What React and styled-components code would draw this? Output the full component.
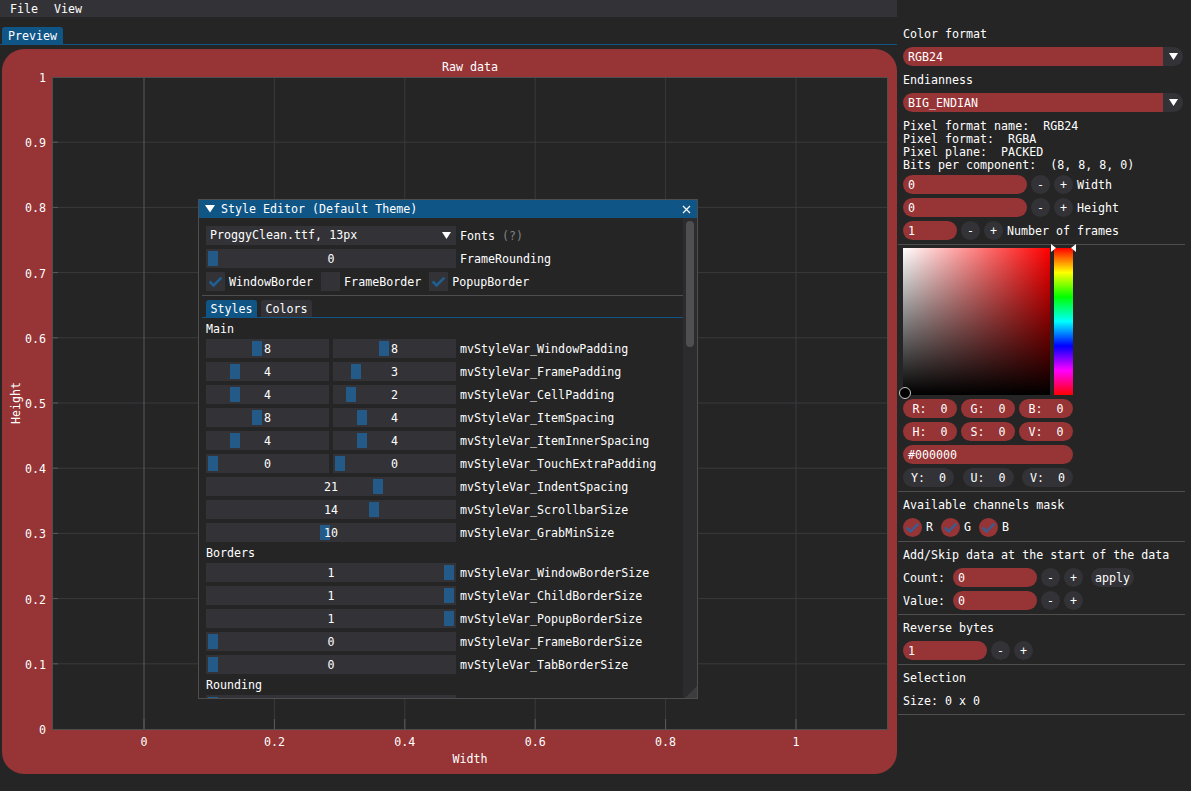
import React from "react"
import styled, { createGlobalStyle } from "styled-components"

const RED = "#963436"
const FRAME = "#333337"
const BLUE = "#0f5687"
const GRAB = "#245a87"
const BORDER = "#4e4e4e"
const BG = "#252526"

const GlobalStyle = createGlobalStyle`
  html, body { margin: 0; padding: 0; background: ${BG}; }
  body {
    font-family: "DejaVu Sans Mono", "Liberation Mono", monospace;
    font-size: 11.65px;
    line-height: 13px;
    color: #fff;
  }
  * { box-sizing: border-box; }
`

const Page = styled.div`
    position: relative;
    width: 1191px;
    height: 791px;
    display: flex;
    overflow: hidden;
    background: ${BG};
`

/* ---------- left window ---------- */

const LeftPane = styled.div`
    width: 898px;
    display: flex;
    flex-direction: column;
`

const MenuBar = styled.div`
    width: 897px;
    height: 17px;
    background: ${FRAME};
    display: flex;
    align-items: center;
    gap: 16px;
    padding: 2px 0 0 10px;
`

const TabBar = styled.div`
    margin-top: 10px;
    width: 897px;
    height: 18px;
    display: flex;
    padding-left: 2px;
    border-bottom: 1px solid ${BLUE};
`

const Tab = styled.div`
    height: 17px;
    line-height: 19px;
    padding: 0 6px;
    background: ${p => (p.$active ? BLUE : FRAME)};
    border-radius: 3px 3px 0 0;
`

const PlotFrame = styled.div`
    margin: 4px 0 0 2px;
    width: 895px;
    height: 725px;
    background: ${RED};
    border-radius: 22px;
`

const PlotTitle = styled.div`
    height: 28px;
    padding: 12px 0 0 50px;
    width: 886px;
    text-align: center;
`

const PlotRow = styled.div`
    display: flex;
`

const YAxis = styled.div`
    position: relative;
    width: 50px;
    height: 653px;
`

const YTick = styled.span`
    position: absolute;
    right: 6px;
    line-height: 13px;
`

const YTitle = styled.span`
    position: absolute;
    left: 14px;
    top: 326px;
    transform: translate(-50%, -50%) rotate(-90deg);
    white-space: nowrap;
`

const PlotArea = styled.div`
    width: 836px;
    height: 653px;
    border: 1px solid ${BORDER};
    background: ${BG};

    svg { display: block; }
`

const XAxis = styled.div`
    position: relative;
    margin-left: 50px;
    width: 836px;
    height: 23px;
`

const XTick = styled.span`
    position: absolute;
    top: 6px;
    transform: translateX(-50%);
`

const XTitle = styled.div`
    margin-left: 50px;
    width: 836px;
    text-align: center;
`

const xs = v => 91 + v * 652
const ys = v => 651 - v * 652

function PlotGrid () {
    const xv = [0, 0.2, 0.4, 0.6, 0.8, 1]
    const yv = [0.1, 0.2, 0.3, 0.4, 0.5, 0.6, 0.7, 0.8, 0.9]
    return (
        <svg width="834" height="651">
            {yv.map(v => (
                <line key={'h' + v} x1="0" x2="834" y1={ys(v)} y2={ys(v)} stroke="#3a3a3c" strokeWidth="1" />
            ))}
            {xv.map(v => (
                <line key={'v' + v} x1={xs(v)} x2={xs(v)} y1="0" y2="651" stroke={v === 0 ? '#5a5a5c' : '#3a3a3c'} strokeWidth="1" />
            ))}
            {yv.map(v => (
                <line key={'t' + v} x1="0" x2="5" y1={ys(v)} y2={ys(v)} stroke="#5a5a5c" strokeWidth="1" />
            ))}
            {xv.map(v => (
                <line key={'b' + v} x1={xs(v)} x2={xs(v)} y1="641" y2="651" stroke="#5a5a5c" strokeWidth="1" />
            ))}
        </svg>
    )
}

/* ---------- style editor ---------- */

const EditorWindow = styled.div`
    position: absolute;
    left: 198px;
    top: 199px;
    width: 500px;
    height: 500px;
    background: ${BG};
    border: 1px solid ${BORDER};
    display: flex;
    flex-direction: column;
`

const EditorTitle = styled.div`
    height: 18px;
    flex-shrink: 0;
    background: ${BLUE};
    display: flex;
    align-items: center;
    gap: 6px;
    padding: 0 6px 0 6px;

    span { line-height: 15px; }
    .close { margin-left: auto; }
`

const EditorBody = styled.div`
    position: relative;
    flex: 1;
    display: flex;
    overflow: hidden;
`

const EditorContent = styled.div`
    flex: 1;
    display: flex;
    flex-direction: column;
    gap: 4px;
    padding: 8px 3px 0 7px;
    overflow: hidden;
`

const Scrollbar = styled.div`
    width: 14px;
    background: #2c2c2f;
    padding: 3px 3px 0 3px;

    div {
        height: 126px;
        border-radius: 4px;
        background: #4f4f52;
    }
`

const ResizeGrip = styled.svg`
    position: absolute;
    right: 0;
    bottom: 0;
`

const EdRow = styled.div`
    display: flex;
    align-items: center;
    gap: 4px;
    height: 19px;
    flex-shrink: 0;
    white-space: nowrap;

    & > span { height: 19px; line-height: 21px; }
`

const EdCombo = styled.div`
    width: 250px;
    height: 19px;
    background: ${FRAME};
    display: flex;
    align-items: center;
    justify-content: space-between;
    padding-left: 4px;
    line-height: 21px;

    span.arrow {
        width: 19px;
        display: flex;
        justify-content: center;
    }
`

const Muted = styled.span`
    color: #808080;
`

const SliderTrack = styled.div`
    position: relative;
    width: ${p => p.$w}px;
    height: 19px;
    background: ${FRAME};
    text-align: center;
    line-height: 21px;
`

const SliderGrab = styled.div`
    position: absolute;
    top: 2px;
    width: 10px;
    height: 15px;
    background: ${GRAB};
`

const SliderValue = styled.span`
    position: relative;
`

const CheckBox = styled.div`
    width: 19px;
    height: 19px;
    background: ${FRAME};
    margin-left: ${p => p.$first ? 0 : 4}px;
`

const EdSeparator = styled.div`
    height: 1px;
    margin: 0 -4px;
    background: ${BORDER};
    flex-shrink: 0;
`

const EdTabs = styled.div`
    display: flex;
    gap: 4px;
    height: 18px;
    margin: 0 -4px;
    padding-left: 4px;
    border-bottom: 1px solid ${BLUE};
    flex-shrink: 0;
`

const EdTab = styled(Tab)`
    padding: 0 4.5px;
`

const SectionText = styled.div`
    height: 13px;
    line-height: 15px;
    flex-shrink: 0;
`

function Check ({ color, size = 19 }) {
    return (
        <svg width={size} height={size} viewBox="0 0 19 19">
            <polyline points="3.65,9.5 7.55,13.4 15.35,5.6" fill="none" stroke={color} strokeWidth="2.6" />
        </svg>
    )
}

function Slider ({ w, frac, value }) {
    const left = 2 + frac * (w - 14)
    return (
        <SliderTrack $w={w}>
            <SliderGrab style={{ left: left + 'px' }} />
            <SliderValue>{value}</SliderValue>
        </SliderTrack>
    )
}

const mainRows = [
    ['WindowPadding', [8 / 20, '8'], [8 / 20, '8']],
    ['FramePadding', [4 / 20, '4'], [3 / 20, '3']],
    ['CellPadding', [4 / 20, '4'], [2 / 20, '2']],
    ['ItemSpacing', [8 / 20, '8'], [4 / 20, '4']],
    ['ItemInnerSpacing', [4 / 20, '4'], [4 / 20, '4']],
    ['TouchExtraPadding', [0, '0'], [0, '0']],
    ['IndentSpacing', [21 / 30, '21']],
    ['ScrollbarSize', [13 / 19, '14']],
    ['GrabMinSize', [9 / 19, '10']],
]

const borderRows = [
    ['WindowBorderSize', [1, '1']],
    ['ChildBorderSize', [1, '1']],
    ['PopupBorderSize', [1, '1']],
    ['FrameBorderSize', [0, '0']],
    ['TabBorderSize', [0, '0']],
]

function VarRow ({ name, a, b }) {
    return (
        <EdRow>
            {b ? (
                <>
                    <Slider w={123} frac={a[0]} value={a[1]} />
                    <Slider w={123} frac={b[0]} value={b[1]} />
                </>
            ) : (
                <Slider w={250} frac={a[0]} value={a[1]} />
            )}
            <span>mvStyleVar_{name}</span>
        </EdRow>
    )
}

function StyleEditor () {
    return (
        <EditorWindow>
            <EditorTitle>
                <svg width="10" height="8" viewBox="0 0 10 8"><polygon points="0,0 10,0 5,7.5" fill="#fff" /></svg>
                <span>Style Editor (Default Theme)</span>
                <svg className="close" width="9" height="9" viewBox="0 0 9 9">
                    <path d="M1 1 L8 8 M8 1 L1 8" stroke="#fff" strokeWidth="1.2" />
                </svg>
            </EditorTitle>
            <EditorBody>
                <EditorContent>
                    <EdRow>
                        <EdCombo>
                            <span>ProggyClean.ttf, 13px</span>
                            <span className="arrow">
                                <svg width="9" height="7" viewBox="0 0 9 7"><polygon points="0,0 9,0 4.5,7" fill="#fff" /></svg>
                            </span>
                        </EdCombo>
                        <span>Fonts <Muted>(?)</Muted></span>
                    </EdRow>
                    <EdRow>
                        <Slider w={250} frac={0} value="0" />
                        <span>FrameRounding</span>
                    </EdRow>
                    <EdRow>
                        <CheckBox $first><Check color="#1f5f91" /></CheckBox>
                        <span>WindowBorder</span>
                        <CheckBox />
                        <span>FrameBorder</span>
                        <CheckBox><Check color="#1f5f91" /></CheckBox>
                        <span>PopupBorder</span>
                    </EdRow>
                    <EdSeparator />
                    <EdTabs>
                        <EdTab $active>Styles</EdTab>
                        <EdTab>Colors</EdTab>
                    </EdTabs>
                    <SectionText>Main</SectionText>
                    {mainRows.map(r => <VarRow key={r[0]} name={r[0]} a={r[1]} b={r[2]} />)}
                    <SectionText>Borders</SectionText>
                    {borderRows.map(r => <VarRow key={r[0]} name={r[0]} a={r[1]} />)}
                    <SectionText>Rounding</SectionText>
                    <EdRow>
                        <Slider w={250} frac={0} value="" />
                    </EdRow>
                </EditorContent>
                <Scrollbar><div /></Scrollbar>
                <ResizeGrip width="12" height="12" viewBox="0 0 12 12">
                    <polygon points="12,0 12,12 0,12" fill="#3d3d40" />
                </ResizeGrip>
            </EditorBody>
        </EditorWindow>
    )
}

/* ---------- right panel ---------- */

const RightPane = styled.div`
    width: 293px;
    padding: 24px 6px 0 0;
    display: flex;
    flex-direction: column;
    gap: 4px;
`

const Label = styled.div`
    height: 19px;
    line-height: 21px;
    margin-left: 5px;
    white-space: nowrap;
`

const Combo = styled.div`
    width: 280px;
    height: 19px;
    margin-left: 5px;
    border-radius: 9.5px;
    overflow: hidden;
    display: flex;
`

const ComboValue = styled.div`
    flex: 1;
    background: ${RED};
    padding-left: 5px;
    line-height: 21px;
`

const ComboArrow = styled.div`
    width: 20px;
    background: ${FRAME};
    display: flex;
    align-items: center;
    justify-content: center;
`

const InfoText = styled.div`
    margin: 4px 0 -1px 5px;
    white-space: pre;
`

const InputRow = styled.div`
    display: flex;
    align-items: center;
    gap: 4px;
    height: 19px;
    margin-left: 5px;
    white-space: nowrap;

    & > span { height: 19px; line-height: 21px; }
`

const Pill = styled.div`
    width: ${p => p.$w}px;
    height: 19px;
    line-height: 21px;
    border-radius: 9.5px;
    background: ${p => (p.$gray ? FRAME : RED)};
    padding-left: ${p => (p.$center ? 0 : 5)}px;
    text-align: ${p => (p.$center ? 'center' : 'left')};
    white-space: pre;
`

const RoundButton = styled.div`
    width: 19px;
    height: 19px;
    border-radius: 50%;
    background: ${FRAME};
    line-height: 20px;
    text-align: center;
`

const ApplyButton = styled.div`
    margin-left: 4px;
    height: 19px;
    line-height: 21px;
    padding: 0 4px;
    border-radius: 9.5px;
    background: ${FRAME};
`

const FieldLabel = styled.span`
    width: 42px;
    margin-right: 4px;
`

const Separator = styled.div`
    height: 1px;
    width: 287px;
    margin-bottom: -1px;
    background: ${BORDER};
`

const Picker = styled.div`
    display: flex;
    gap: 4px;
    height: 147px;
    margin-left: 5px;
`

const SVBox = styled.div`
    position: relative;
    width: 147px;
    height: 147px;
    background: linear-gradient(to top, #000, rgba(0, 0, 0, 0)), linear-gradient(to right, #fff, #f00);
`

const SVMarker = styled.div`
    position: absolute;
    left: -4px;
    bottom: -4px;
    width: 12px;
    height: 12px;
    border-radius: 50%;
    background: #000;
    border: 1.5px solid #c8c8c8;
`

const HueBar = styled.div`
    position: relative;
    width: 19px;
    height: 147px;
    background: linear-gradient(to bottom, #f00 0%, #ff0 16.67%, #0f0 33.33%, #0ff 50%, #00f 66.67%, #f0f 83.33%, #f00 100%);

    svg {
        position: absolute;
        top: -4px;
        left: -3px;
    }
`

const YuvRow = styled.div`
    display: flex;
    justify-content: space-between;
    width: 170px;
    margin-left: 5px;
`

const ChannelRow = styled.div`
    display: flex;
    align-items: center;
    gap: 8px;
    height: 19px;
    margin-left: 5px;
`

const Channel = styled.div`
    display: flex;
    align-items: center;
    gap: 4px;

    span { line-height: 15px; }
`

const CheckCircle = styled.div`
    width: 19px;
    height: 19px;
    border-radius: 50%;
    background: ${RED};
`

function Arrow () {
    return <svg width="9" height="7" viewBox="0 0 9 7"><polygon points="0,0 9,0 4.5,7" fill="#fff" /></svg>
}

function PlusMinus () {
    return (
        <>
            <RoundButton>-</RoundButton>
            <RoundButton>+</RoundButton>
        </>
    )
}

function RightPanel () {
    return (
        <RightPane>
            <Label>Color format</Label>
            <Combo><ComboValue>RGB24</ComboValue><ComboArrow><Arrow /></ComboArrow></Combo>
            <Label>Endianness</Label>
            <Combo><ComboValue>BIG_ENDIAN</ComboValue><ComboArrow><Arrow /></ComboArrow></Combo>
            <InfoText>{'Pixel format name:  RGB24\nPixel format:  RGBA\nPixel plane:  PACKED\nBits per component:  (8, 8, 8, 0)'}</InfoText>
            <InputRow><Pill $w={124}>0</Pill><PlusMinus /><span>Width</span></InputRow>
            <InputRow><Pill $w={124}>0</Pill><PlusMinus /><span>Height</span></InputRow>
            <InputRow><Pill $w={54}>1</Pill><PlusMinus /><span>Number of frames</span></InputRow>
            <Separator />
            <Picker>
                <SVBox><SVMarker /></SVBox>
                <HueBar>
                    <svg width="25" height="8" viewBox="0 0 25 8">
                        <polygon points="0,0 5,4 0,8" fill="#fff" />
                        <polygon points="25,0 20,4 25,8" fill="#fff" />
                    </svg>
                </HueBar>
            </Picker>
            <InputRow>
                <Pill $w={54} $center>{'R:  0'}</Pill>
                <Pill $w={54} $center>{'G:  0'}</Pill>
                <Pill $w={54} $center>{'B:  0'}</Pill>
            </InputRow>
            <InputRow>
                <Pill $w={54} $center>{'H:  0'}</Pill>
                <Pill $w={54} $center>{'S:  0'}</Pill>
                <Pill $w={54} $center>{'V:  0'}</Pill>
            </InputRow>
            <InputRow><Pill $w={170}>#000000</Pill></InputRow>
            <YuvRow>
                <Pill $w={51} $center $gray>{'Y:  0'}</Pill>
                <Pill $w={51} $center $gray>{'U:  0'}</Pill>
                <Pill $w={51} $center $gray>{'V:  0'}</Pill>
            </YuvRow>
            <Separator />
            <Label>Available channels mask</Label>
            <ChannelRow>
                {['R', 'G', 'B'].map(c => (
                    <Channel key={c}>
                        <CheckCircle><Check color="#3c5c8d" /></CheckCircle>
                        <span>{c}</span>
                    </Channel>
                ))}
            </ChannelRow>
            <Separator />
            <Label>Add/Skip data at the start of the data</Label>
            <InputRow>
                <FieldLabel>Count:</FieldLabel>
                <Pill $w={84}>0</Pill>
                <PlusMinus />
                <ApplyButton>apply</ApplyButton>
            </InputRow>
            <InputRow>
                <FieldLabel>Value:</FieldLabel>
                <Pill $w={84}>0</Pill>
                <PlusMinus />
            </InputRow>
            <Separator />
            <Label>Reverse bytes</Label>
            <InputRow><Pill $w={84}>1</Pill><PlusMinus /></InputRow>
            <Separator />
            <Label>Selection</Label>
            <Label>Size: 0 x 0</Label>
            <Separator />
        </RightPane>
    )
}

export default function App () {
    const yTicks = [1, 0.9, 0.8, 0.7, 0.6, 0.5, 0.4, 0.3, 0.2, 0.1, 0]
    const xTicks = [0, 0.2, 0.4, 0.6, 0.8, 1]
    return (
        <Page>
            <GlobalStyle />
            <LeftPane>
                <MenuBar>
                    <span>File</span>
                    <span>View</span>
                </MenuBar>
                <TabBar>
                    <Tab $active>Preview</Tab>
                </TabBar>
                <PlotFrame>
                    <PlotTitle>Raw data</PlotTitle>
                    <PlotRow>
                        <YAxis>
                            {yTicks.map(v => (
                                <YTick key={v} style={{ top: (652 - v * 652 - 5) + 'px' }}>{v}</YTick>
                            ))}
                            <YTitle>Height</YTitle>
                        </YAxis>
                        <PlotArea>
                            <PlotGrid />
                        </PlotArea>
                    </PlotRow>
                    <XAxis>
                        {xTicks.map(v => (
                            <XTick key={v} style={{ left: (92 + v * 652) + 'px' }}>{v}</XTick>
                        ))}
                    </XAxis>
                    <XTitle>Width</XTitle>
                </PlotFrame>
            </LeftPane>
            <RightPanel />
            <StyleEditor />
        </Page>
    )
}
